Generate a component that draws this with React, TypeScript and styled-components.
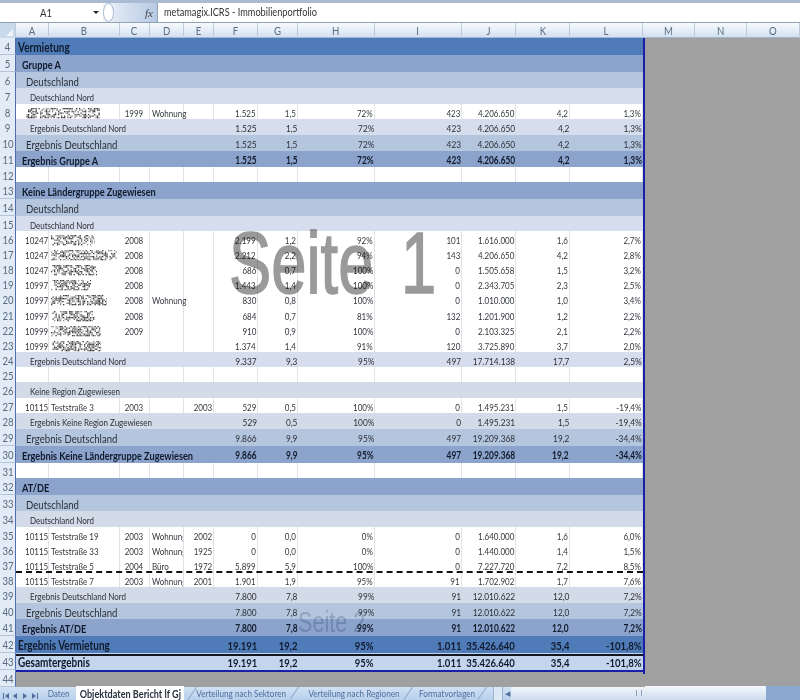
import React from "react";
import styled, { createGlobalStyle } from "styled-components";

const Global = createGlobalStyle`
  html, body { margin: 0; padding: 0; background: #a0a0a0; }
  body { font-family: "Lato", "Liberation Sans", sans-serif; }
`;

const COLS = "16px 33px 71px 30px 34px 30px 44px 40px 77px 87px 54px 54px 73px";
const BANDS = { h1: "#4f7cb8", h2: "#8ca3cb", h3: "#b4c5de", h4: "#d6deed", r26: "#d3dae8", total: "#c4d6ee", data: "#ffffff" };
type Kind = keyof typeof BANDS;

const Page = styled.div`
  width: 800px;
  height: 700px;
  overflow: hidden;
  display: flex;
  flex-direction: column;
  background: #a0a0a0;
  filter: blur(0.3px);
  color: #26292e;
`;
const Narrow = styled.span<{ $origin?: string }>`
  display: inline-block;
  flex: none;
  white-space: nowrap;
  transform: scaleX(0.8);
  transform-origin: ${(p) => p.$origin || "left"} center;
`;
const TopStrip = styled.div`
  height: 3px;
  background: #a8bbd2;
`;
const FormulaBar = styled.div`
  height: 19px;
  display: flex;
  background: #fff;
  border-bottom: 1px solid #8fa3b5;
`;
const NameBox = styled.div`
  width: 103px;
  display: flex;
  align-items: center;
  justify-content: space-between;
  padding: 0 4px 0 40px;
  box-sizing: border-box;
  font-size: 12px;
  color: #333;
`;
const DropArrow = styled.span`
  width: 0;
  height: 0;
  border-left: 3px solid transparent;
  border-right: 3px solid transparent;
  border-top: 3px solid #222;
`;
const FxArea = styled.div`
  width: 55px;
  position: relative;
  display: flex;
  align-items: center;
  justify-content: flex-end;
  padding-right: 4px;
  box-sizing: border-box;
  background: linear-gradient(90deg, #f2f6fb 0%, #dbe5f2 30%, #b7cae4 100%);
  border-right: 1px solid #8fa3b5;
  font: italic 11px "Liberation Serif", serif;
  color: #444;
`;
const Oval = styled.span`
  position: absolute;
  left: 0;
  top: 0;
  width: 9px;
  height: 17px;
  border-radius: 50%;
  background: #fff;
  border: 1px solid #a9bdd6;
`;
const FormulaText = styled.div`
  flex: 1;
  padding-left: 6px;
  font-size: 11.5px;
  line-height: 18px;
  color: #333;
`;
const ColHeader = styled.div`
  height: 15px;
  display: grid;
  grid-template-columns: ${COLS} 52px 52px 53px;
  background: linear-gradient(180deg, #f6f9fd 0%, #e6eef8 50%, #d3e0ef 100%);
  border-bottom: 1px solid #9eb6ce;
  box-sizing: border-box;
`;
const ColName = styled.div`
  display: flex;
  align-items: center;
  justify-content: center;
  font-size: 12px;
  color: #5a6b82;
  border-right: 1px solid #bccbdc;
`;
const Corner = styled(ColName)`
  background: #c9d9ec;
  position: relative;
  &::after {
    content: "";
    position: absolute;
    right: 2px;
    bottom: 2px;
    border-left: 7px solid transparent;
    border-bottom: 7px solid #f1f5fa;
  }
`;
const Sheet = styled.div`
  position: relative;
  flex: 1;
  display: flex;
  min-height: 0;
`;
const PrintArea = styled.div`
  width: 645px;
  display: flex;
  flex-direction: column;
`;
const Row = styled.div<{ $h: number; $kind: Kind }>`
  height: ${(p) => p.$h}px;
  display: grid;
  grid-template-columns: ${COLS};
  width: 645px;
  box-sizing: border-box;
  background: ${(p) => BANDS[p.$kind]};
`;
const RowNum = styled.div`
  display: flex;
  align-items: center;
  justify-content: center;
  padding-top: 1px;
  background: #e3ebf6;
  color: #5a6b82;
  font-size: 12px;
  border-right: 1px solid #4d6fb2;
  border-bottom: 1px solid #b4c5d9;
  box-sizing: border-box;
`;
const Label = styled.div<{ $indent: number; $bold: boolean; $size: number }>`
  grid-column: span 5;
  padding: 1px 0 0 ${(p) => p.$indent}px;
  font-weight: ${(p) => (p.$bold ? 700 : 400)};
  font-size: ${(p) => p.$size}px;
  display: flex;
  align-items: center;
  white-space: nowrap;
  min-width: 0;
  color: ${(p) => (p.$bold ? "#101a2c" : "#2b3038")};
`;
const Value = styled.div<{ $bold: boolean; $size: number }>`
  display: flex;
  align-items: center;
  justify-content: flex-end;
  padding: 1px 1px 0 0;
  min-width: 0;
  font-weight: ${(p) => (p.$bold ? 700 : 400)};
  font-size: ${(p) => p.$size}px;
  white-space: nowrap;
  color: ${(p) => (p.$bold ? "#101a2c" : "#2b3038")};
`;
const Cell = styled.div<{ $right?: boolean; $left?: number; $end?: number; $clean?: boolean; $span?: number; $spill?: boolean }>`
  display: flex;
  align-items: center;
  min-width: 0;
  overflow: ${(p) => (p.$spill ? "visible" : "hidden")};
  box-sizing: border-box;
  justify-content: ${(p) => (p.$right ? "flex-end" : "flex-start")};
  padding: 1px ${(p) => p.$end || 0}px 0 ${(p) => p.$left || 0}px;
  border-bottom: ${(p) => (p.$clean ? "none" : "1px solid #d0d3d8")};
  border-right: ${(p) => (p.$clean ? "none" : "1px solid #dfe2e7")};
  grid-column: span ${(p) => p.$span || 1};
  font-size: 10px;
  color: #33373d;
`;
const RightGray = styled.div`
  flex: 1;
  background: #a0a0a0;
`;
const BottomGray = styled.div`
  flex: 1;
  background: #a0a0a0;
  display: flex;
  border-top: 2px solid #1a1fa8;
  margin-left: 16px;
`;
const LastNum = styled(RowNum)`
  width: 16px;
  margin-left: -16px;
  margin-top: -2px;
`;
const Frame = styled.div`
  position: absolute;
  left: 643px;
  top: 0;
  width: 2px;
  height: 636px;
  background: #1a1fa8;
`;
const DashLine = styled.div`
  position: absolute;
  left: 16px;
  top: 533px;
  width: 627px;
  border-top: 2px dashed #111;
`;
const SolidLine = styled.div`
  position: absolute;
  left: 16px;
  top: 616px;
  width: 627px;
  height: 2px;
  background: #121722;
`;
const Watermark = styled.div<{ $size: number; $color: string; $x: number; $y: number; $stroke: number; $gap: number }>`
  position: absolute;
  left: ${(p) => p.$x}px;
  top: ${(p) => p.$y}px;
  font: ${(p) => p.$size}px/1 "Liberation Sans", sans-serif;
  color: ${(p) => p.$color};
  -webkit-text-stroke: ${(p) => p.$stroke}px ${(p) => p.$color};
  word-spacing: ${(p) => p.$gap}px;
  mix-blend-mode: multiply;
  transform: scaleX(0.72);
  transform-origin: left top;
  white-space: pre;
  pointer-events: none;
`;
const TabBar = styled.div`
  height: 14px;
  display: flex;
  align-items: center;
  background: linear-gradient(180deg, #d3e3f5 0%, #b8cfeb 100%);
  color: #4f6f9e;
  overflow: hidden;
`;
const Nav = styled.div`
  width: 44px;
  flex: none;
  padding-left: 3px;
  box-sizing: border-box;
`;
const Tab = styled.div<{ $active?: boolean; $w: number; $mr: number }>`
  width: ${(p) => p.$w}px;
  margin-right: ${(p) => p.$mr}px;
  flex: none;
  height: 14px;
  position: relative;
  display: flex;
  align-items: center;
  justify-content: center;
  background: ${(p) => (p.$active ? "#fff" : "transparent")};
  font-weight: ${(p) => (p.$active ? 700 : 400)};
  color: ${(p) => (p.$active ? "#26303f" : "#4f6f9e")};
  font-size: ${(p) => (p.$active ? 11.4 : 10.2)}px;
  &::after {
    content: "";
    position: absolute;
    right: -9px;
    top: -1px;
    width: 1px;
    height: 16px;
    background: #8fa8c8;
    transform: rotate(35deg);
  }
`;
const TabSplit = styled.div`
  width: 10px;
  height: 14px;
  flex: none;
  margin-left: 19px;
  background: #dde8f5;
  border-left: 1px solid #9db3cd;
  border-right: 1px solid #9db3cd;
  box-sizing: border-box;
`;
const ScrollLeft = styled.div`
  width: 8px;
  flex: none;
  margin-left: 0;
  display: flex;
  justify-content: center;
  color: #4f6f9e;
  font-size: 7px;
`;
const ScrollTrack = styled.div`
  width: 255px;
  flex: none;
  height: 14px;
  background: linear-gradient(180deg, #f3f7fc 0%, #cfdded 100%);
  display: flex;
  align-items: center;
  justify-content: center;
  &::after {
    content: "";
    width: 4px;
    height: 6px;
    border-left: 1px solid #8ea3bc;
    border-right: 1px solid #8ea3bc;
  }
`;
const ScrollRest = styled.div`
  flex: 1;
  height: 14px;
  background: #89a7cf;
`;

const Scribble = ({ w, seed }: { w: number; seed: number }) => {
  let s = seed * 9301 + 49297;
  const next = () => {
    s = (s * 9301 + 49297) % 233280;
    return s / 233280;
  };
  const dots: React.ReactNode[] = [];
  for (let x = 0; x < w; x += 1.5) {
    const edge = Math.min(x, w - x) / 6;
    for (let y = 1; y < 11; y += 1.5) {
      if (next() < 0.6 * Math.min(1, edge + 0.4)) {
        dots.push(<rect key={`${x}-${y}`} x={x} y={y} width="1.3" height="1.3" fill={next() > 0.45 ? "#3c3c3c" : "#8f8f8f"} />);
      }
    }
  }
  return (
    <svg width={w} height={12} style={{ flex: "none" }}>
      {dots}
    </svg>
  );
};

const toLevel: Record<string, { indent: number; size: number; bold: boolean }> = {
  h1: { indent: 2, size: 12.5, bold: true },
  h2: { indent: 6, size: 11.5, bold: true },
  h3: { indent: 10, size: 12, bold: false },
  h4: { indent: 14, size: 10, bold: false },
};

type Band = { n: number; h: number; kind: Kind; label?: string; lv?: keyof typeof toLevel; vals?: string[]; big?: boolean };
type Data = { n: number; h: number; a?: string; scr?: number; c?: string; d?: string; e?: string; vals?: string[] };

const R1 = ["1.525", "1,5", "72%", "423", "4.206.650", "4,2", "1,3%"];
const R2 = ["9.866", "9,9", "95%", "497", "19.209.368", "19,2", "-34,4%"];
const R3 = ["7.800", "7,8", "99%", "91", "12.010.622", "12,0", "7,2%"];
const R4 = ["19.191", "19,2", "95%", "1.011", "35.426.640", "35,4", "-101,8%"];
const R5 = ["529", "0,5", "100%", "0", "1.495.231", "1,5", "-19,4%"];

const rows: (Band | Data)[] = [
  { n: 4, h: 18, kind: "h1", label: "Vermietung", lv: "h1" },
  { n: 5, h: 17, kind: "h2", label: "Gruppe A", lv: "h2" },
  { n: 6, h: 16, kind: "h3", label: "Deutschland", lv: "h3" },
  { n: 7, h: 16, kind: "h4", label: "Deutschland Nord", lv: "h4" },
  { n: 8, h: 15, scr: 75, c: "1999", d: "Wohnung", vals: R1 },
  { n: 9, h: 16, kind: "h4", label: "Ergebnis Deutschland Nord", lv: "h4", vals: R1 },
  { n: 10, h: 16, kind: "h3", label: "Ergebnis Deutschland", lv: "h3", vals: R1 },
  { n: 11, h: 16, kind: "h2", label: "Ergebnis Gruppe A", lv: "h2", vals: R1 },
  { n: 12, h: 15 },
  { n: 13, h: 18, kind: "h2", label: "Keine Ländergruppe Zugewiesen", lv: "h2" },
  { n: 14, h: 17, kind: "h3", label: "Deutschland", lv: "h3" },
  { n: 15, h: 15, kind: "h4", label: "Deutschland Nord", lv: "h4" },
  { n: 16, h: 15, a: "10247", scr: 44, c: "2008", vals: ["2.199", "1,2", "92%", "101", "1.616.000", "1,6", "2,7%"] },
  { n: 17, h: 15, a: "10247", scr: 66, c: "2008", vals: ["2.212", "2,2", "94%", "143", "4.206.650", "4,2", "2,8%"] },
  { n: 18, h: 15, a: "10247", scr: 46, c: "2008", vals: ["686", "0,7", "100%", "0", "1.505.658", "1,5", "3,2%"] },
  { n: 19, h: 15, a: "10997", scr: 40, c: "2008", vals: ["1.443", "1,4", "100%", "0", "2.343.705", "2,3", "2,5%"] },
  { n: 20, h: 16, a: "10997", scr: 56, c: "2008", d: "Wohnung", vals: ["830", "0,8", "100%", "0", "1.010.000", "1,0", "3,4%"] },
  { n: 21, h: 15, a: "10997", scr: 44, c: "2008", vals: ["684", "0,7", "81%", "132", "1.201.900", "1,2", "2,2%"] },
  { n: 22, h: 15, a: "10999", scr: 50, c: "2009", vals: ["910", "0,9", "100%", "0", "2.103.325", "2,1", "2,2%"] },
  { n: 23, h: 15, a: "10999", scr: 50, vals: ["1.374", "1,4", "91%", "120", "3.725.890", "3,7", "2,0%"] },
  { n: 24, h: 15, kind: "h4", label: "Ergebnis Deutschland Nord", lv: "h4", vals: ["9.337", "9,3", "95%", "497", "17.714.138", "17,7", "2,5%"] },
  { n: 25, h: 15 },
  { n: 26, h: 16, kind: "r26", label: "Keine Region Zugewiesen", lv: "h4" },
  { n: 27, h: 15, a: "10115", c: "2003", e: "2003", vals: R5 },
  { n: 28, h: 16, kind: "r26", label: "Ergebnis Keine Region Zugewiesen", lv: "h4", vals: R5 },
  { n: 29, h: 17, kind: "h3", label: "Ergebnis Deutschland", lv: "h3", vals: R2 },
  { n: 30, h: 17, kind: "h2", label: "Ergebnis Keine Ländergruppe Zugewiesen", lv: "h2", vals: R2 },
  { n: 31, h: 15 },
  { n: 32, h: 18, kind: "h2", label: "AT/DE", lv: "h2" },
  { n: 33, h: 16, kind: "h3", label: "Deutschland", lv: "h3" },
  { n: 34, h: 16, kind: "r26", label: "Deutschland Nord", lv: "h4" },
  { n: 35, h: 15, a: "10115", c: "2003", d: "Wohnung", e: "2002", vals: ["0", "0,0", "0%", "0", "1.640.000", "1,6", "6,0%"] },
  { n: 36, h: 15, a: "10115", c: "2003", d: "Wohnung", e: "1925", vals: ["0", "0,0", "0%", "0", "1.440.000", "1,4", "1,5%"] },
  { n: 37, h: 15, a: "10115", c: "2004", d: "Büro", e: "1972", vals: ["5.899", "5,9", "100%", "0", "7.227.720", "7,2", "8,5%"] },
  { n: 38, h: 15, a: "10115", c: "2003", d: "Wohnung", e: "2001", vals: ["1.901", "1,9", "95%", "91", "1.702.902", "1,7", "7,6%"] },
  { n: 39, h: 16, kind: "r26", label: "Ergebnis Deutschland Nord", lv: "h4", vals: R3 },
  { n: 40, h: 16, kind: "h3", label: "Ergebnis Deutschland", lv: "h3", vals: R3 },
  { n: 41, h: 18, kind: "h2", label: "Ergebnis AT/DE", lv: "h2", vals: R3 },
  { n: 42, h: 18, kind: "h1", label: "Ergebnis Vermietung", lv: "h1", vals: R4, big: true },
  { n: 43, h: 19, kind: "total", label: "Gesamtergebnis", lv: "h1", vals: R4, big: true },
];
const streets: Record<number, string> = { 27: "Teststraße 3", 35: "Teststraße 19", 36: "Teststraße 33", 37: "Teststraße 5", 38: "Teststraße 7" };

const BandRow = ({ r }: { r: Band }) => {
  const st = toLevel[r.lv as string];
  return (
    <Row $h={r.h} $kind={r.kind}>
      <RowNum>
        <Narrow $origin="center">{r.n}</Narrow>
      </RowNum>
      <Label $indent={st.indent} $bold={st.bold} $size={st.size}>
        <Narrow>{r.label}</Narrow>
      </Label>
      {(r.vals || []).map((v, i) => (
        <Value key={i} $bold={st.bold} $size={r.big ? 11.9 : 10.4}>
          <Narrow $origin="right">{v}</Narrow>
        </Value>
      ))}
    </Row>
  );
};

const DataRow = ({ r }: { r: Data }) => {
  const cells = r.vals || ["", "", "", "", "", "", ""];
  return (
    <Row $h={r.h} $kind="data">
      <RowNum>
        <Narrow $origin="center">{r.n}</Narrow>
      </RowNum>
      {r.n === 8 ? (
        <Cell $span={2} $left={9}>
          <Scribble w={r.scr as number} seed={r.n} />
        </Cell>
      ) : (
        <>
          <Cell $left={9} $spill>
            <Narrow>{r.a}</Narrow>
          </Cell>
          <Cell $clean={!!r.scr} $left={2}>
            {r.scr ? <Scribble w={r.scr} seed={r.n} /> : <Narrow>{streets[r.n]}</Narrow>}
          </Cell>
        </>
      )}
      <Cell $right $end={6}>
        <Narrow $origin="right">{r.c}</Narrow>
      </Cell>
      <Cell $left={2} $spill={!r.e}>
        <Narrow>{r.d}</Narrow>
      </Cell>
      <Cell $right $end={1}>
        <Narrow $origin="right">{r.e}</Narrow>
      </Cell>
      {cells.map((v, i) => (
        <Cell key={i} $right $end={1}>
          <Narrow $origin="right">{v}</Narrow>
        </Cell>
      ))}
    </Row>
  );
};

const NavIcons = () => (
  <svg width="36" height="8" viewBox="0 0 36 8">
    <g fill="#4f6f9e">
      <rect x="0" y="1" width="1" height="6" />
      <path d="M6 1v6L2 4z" />
      <path d="M14 1v6l-4-3z" />
      <path d="M20 1v6l4-3z" />
      <path d="M29 1v6l4-3z" />
      <rect x="34" y="1" width="1" height="6" />
    </g>
  </svg>
);

export default function App() {
  return (
    <Page>
      <Global />
      <TopStrip />
      <FormulaBar>
        <NameBox>
          <Narrow>A1</Narrow>
          <DropArrow />
        </NameBox>
        <FxArea>
          <Oval />
          fx
        </FxArea>
        <FormulaText>
          <Narrow>metamagix.ICRS - Immobilienportfolio</Narrow>
        </FormulaText>
      </FormulaBar>
      <ColHeader>
        <Corner />
        {"ABCDEFGHIJKLMNO".split("").map((c) => (
          <ColName key={c}>
            <Narrow $origin="center">{c}</Narrow>
          </ColName>
        ))}
      </ColHeader>
      <Sheet>
        <PrintArea>
          {rows.map((r) => ("kind" in r ? <BandRow key={r.n} r={r as Band} /> : <DataRow key={r.n} r={r as Data} />))}
          <BottomGray>
            <LastNum>
              <Narrow $origin="center">44</Narrow>
            </LastNum>
          </BottomGray>
        </PrintArea>
        <RightGray />
        <Frame />
        <DashLine />
        <SolidLine />
        <Watermark $size={88} $color="#9a9a9a" $x={229} $y={181} $stroke={1.5} $gap={14}>
          {"Seite 1"}
        </Watermark>
        <Watermark $size={30} $color="#cfd4dc" $x={298} $y={569} $stroke={0} $gap={0}>
          {"Seite 2"}
        </Watermark>
      </Sheet>
      <TabBar>
        <Nav>
          <NavIcons />
        </Nav>
        <Tab $w={30} $mr={2}>
          <Narrow $origin="center">Daten</Narrow>
        </Tab>
        <Tab $active $w={108} $mr={12}>
          <Narrow $origin="center">Objektdaten Bericht lf Gj</Narrow>
        </Tab>
        <Tab $w={90} $mr={22}>
          <Narrow $origin="center">Verteilung nach Sektoren</Narrow>
        </Tab>
        <Tab $w={92} $mr={20}>
          <Narrow $origin="center">Verteilung nach Regionen</Narrow>
        </Tab>
        <Tab $w={54} $mr={0}>
          <Narrow $origin="center">Formatvorlagen</Narrow>
        </Tab>
        <TabSplit />
        <ScrollLeft>◀</ScrollLeft>
        <ScrollTrack />
        <ScrollRest />
      </TabBar>
    </Page>
  );
}
